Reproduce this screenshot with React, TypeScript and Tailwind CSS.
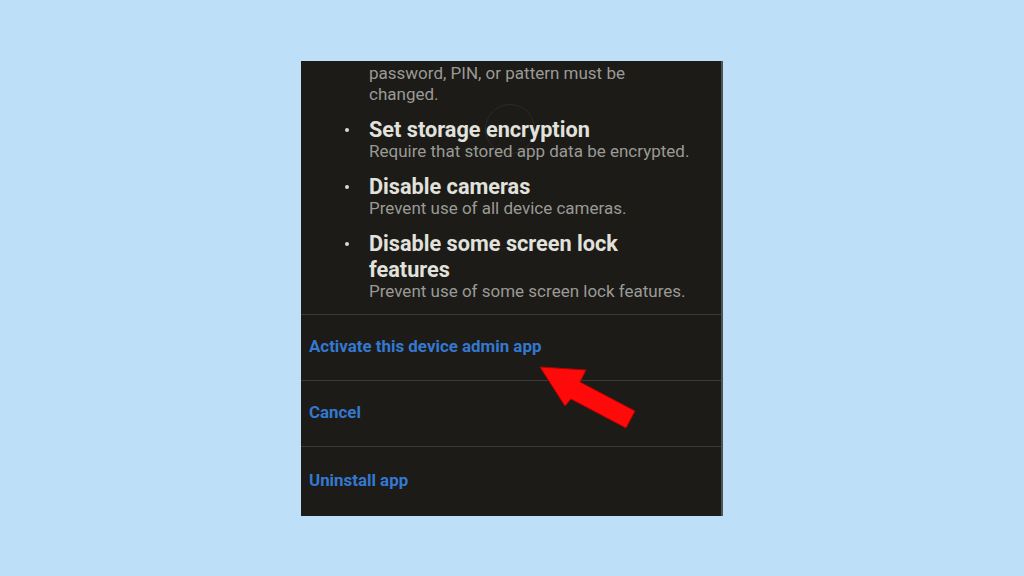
import React from 'react';

const items = [
  { title: ['Set storage encryption'], desc: 'Require that stored app data be encrypted.' },
  { title: ['Disable cameras'], desc: 'Prevent use of all device cameras.' },
  { title: ['Disable some screen lock', 'features'], desc: 'Prevent use of some screen lock features.' },
];

const actions = [
  { label: 'Activate this device admin app', h: 'h-[66px]' },
  { label: 'Cancel', h: 'h-[66px]' },
  { label: 'Uninstall app', h: 'flex-1' },
];

const App: React.FC = () => {
  return (
    <div className="w-[1024px] h-[576px] bg-[#bde0f8] flex items-center justify-center font-['Roboto','Liberation_Sans',sans-serif]">
      <div className="relative w-[422px] h-[455px] bg-[#1c1b18] border-r-2 border-[#4a555c] flex flex-col overflow-hidden">
        {/* faint spinner ghost */}
        <div className="absolute left-[184px] top-[43px] w-[50px] h-[50px] rounded-full border border-[#2c2b28]" />

        {/* permissions list */}
        <div className="h-[253px] pl-[68px] pr-2 relative">
          <div className="mt-[-19px] text-[17px] leading-[21px] text-[#9a9a95]">
            <div>change the screen lock, or when your</div>
            <div>password, PIN, or pattern must be</div>
            <div>changed.</div>
          </div>
          {items.map(item => (
            <div key={item.desc} className="relative mt-[12px]">
              <span className="absolute left-[-24px] top-[11px] w-[4px] h-[4px] rounded-full bg-[#d8d8d4]" />
              {item.title.map(t => (
                <div key={t} className="text-[21.7px] leading-[26px] font-bold text-[#e2e2dd]">{t}</div>
              ))}
              <div className="-mt-[2px] text-[17px] leading-[21px] text-[#9a9a95] whitespace-nowrap">{item.desc}</div>
            </div>
          ))}
        </div>

        {/* dialog actions */}
        {actions.map(a => (
          <div key={a.label} className={`${a.h} border-t border-[#3a3a37] flex items-center px-2`}>
            <span className="text-[16.9px] font-bold text-[#3478d0]">{a.label}</span>
          </div>
        ))}

        {/* red arrow */}
        <svg className="absolute left-0 top-0" width="422" height="455" viewBox="301 60 422 455">
          <polygon
            points="540,366 586,369 580,381 635,410 626,427 571,398 565,405"
            fill="#ff0a0a"
            stroke="#b80000"
            strokeWidth="1"
            strokeLinejoin="round"
          />
        </svg>
      </div>
    </div>
  );
};

export default App;
